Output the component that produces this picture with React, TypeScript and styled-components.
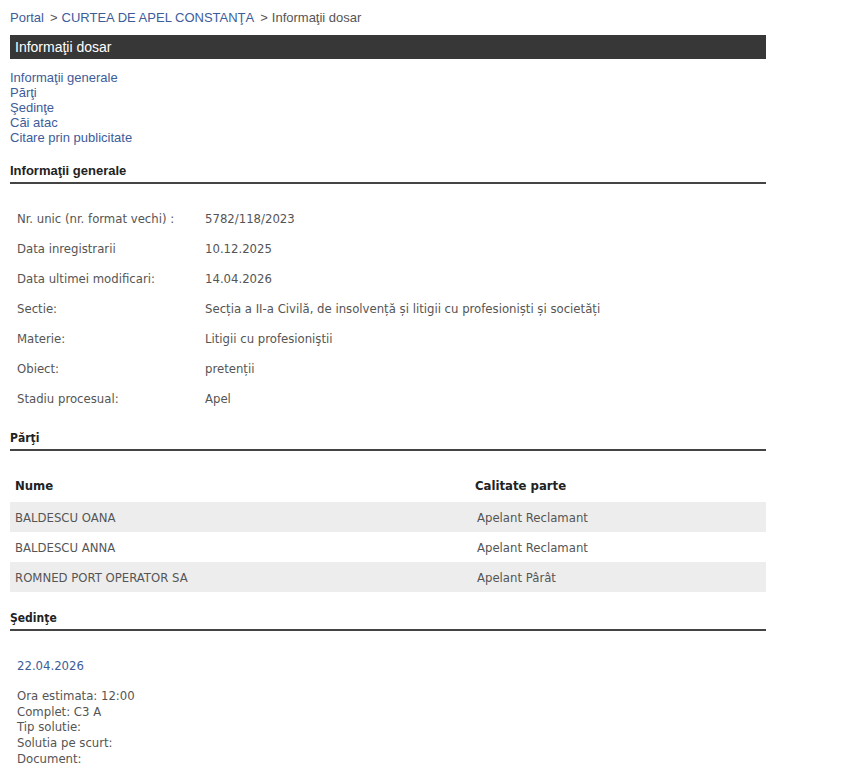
import React from 'react';
import styled, { createGlobalStyle } from 'styled-components';

const GlobalStyle = createGlobalStyle`
  body {
    margin: 0;
    background: #fff;
    font-family: "Liberation Sans", Arial, sans-serif;
  }
`;

const infoRows: [string, string][] = [
  ['Nr. unic (nr. format vechi) :', '5782/118/2023'],
  ['Data inregistrarii', '10.12.2025'],
  ['Data ultimei modificari:', '14.04.2026'],
  ['Sectie:', 'Secția a II-a Civilă, de insolvență și litigii cu profesioniști și societăți'],
  ['Materie:', 'Litigii cu profesioniştii'],
  ['Obiect:', 'pretenții'],
  ['Stadiu procesual:', 'Apel'],
];

const parti: [string, string][] = [
  ['BALDESCU OANA', 'Apelant Reclamant'],
  ['BALDESCU ANNA', 'Apelant Reclamant'],
  ['ROMNED PORT OPERATOR SA', 'Apelant Pârât'],
];

const sedintaLines = [
  'Ora estimata: 12:00',
  'Complet: C3 A',
  'Tip solutie:',
  'Solutia pe scurt:',
  'Document:',
];

export default function App() {
  return (
    <>
      <GlobalStyle />
      <Page>
        <Breadcrumb>
          <Crumb href="#">Portal</Crumb>
          <Sep>&gt;</Sep>
          <Crumb href="#">CURTEA DE APEL CONSTANŢA</Crumb>
          <Sep>&gt;</Sep>
          <Current>Informaţii dosar</Current>
        </Breadcrumb>

        <TitleBar>Informaţii dosar</TitleBar>

        <Nav>
          <NavLink href="#">Informaţii generale</NavLink>
          <NavLink href="#">Părţi</NavLink>
          <NavLink href="#">Şedinţe</NavLink>
          <NavLink href="#">Căi atac</NavLink>
          <NavLink href="#">Citare prin publicitate</NavLink>
        </Nav>

        <SectionTitle>Informaţii generale</SectionTitle>
        <InfoTable>
          <tbody>
            {infoRows.map(([label, value]) => (
              <InfoRow key={label}>
                <InfoLabel>{label}</InfoLabel>
                <InfoValue>{value}</InfoValue>
              </InfoRow>
            ))}
          </tbody>
        </InfoTable>

        <SectionTitle $condensed>Părţi</SectionTitle>
        <PartiTable>
          <thead>
            <tr>
              <HeadCell $first>Nume</HeadCell>
              <HeadCell>Calitate parte</HeadCell>
            </tr>
          </thead>
          <tbody>
            {parti.map(([name, role], i) => (
              <PartiRow key={name} $striped={i % 2 === 0}>
                <Cell $first>{name}</Cell>
                <Cell>{role}</Cell>
              </PartiRow>
            ))}
          </tbody>
        </PartiTable>

        <SectionTitle $condensed>Şedinţe</SectionTitle>
        <Sedinta>
          <SedintaDate>22.04.2026</SedintaDate>
          <SedintaDetails>
            {sedintaLines.map((l) => (
              <div key={l}>{l}</div>
            ))}
          </SedintaDetails>
        </Sedinta>
      </Page>
    </>
  );
}

const Page = styled.div`
  width: 756px;
  padding: 0 0 20px 10px;
`;

const Breadcrumb = styled.div`
  display: flex;
  align-items: center;
  height: 35px;
  font-size: 13px;
  color: #555;
`;

const Crumb = styled.a`
  color: #3d5c9a;
  text-decoration: none;
`;

const Sep = styled.span`
  margin: 0 4px 0 6px;
  color: #555;
`;

const Current = styled.span`
  color: #555;
`;

const TitleBar = styled.div`
  height: 24px;
  line-height: 24px;
  padding-left: 5px;
  background: #373737;
  color: #fff;
  font-size: 14px;
`;

const Nav = styled.nav`
  display: flex;
  flex-direction: column;
  padding-top: 11px;
  margin-bottom: 15px;
`;

const NavLink = styled.a`
  font-size: 13px;
  line-height: 15px;
  height: 15px;
  color: #3d5c9a;
  text-decoration: none;
`;

const SectionTitle = styled.h3<{ $condensed?: boolean }>`
  margin: 0;
  height: 24px;
  line-height: 22px;
  border-bottom: 2px solid #444;
  box-sizing: border-box;
  font-size: ${(p) => (p.$condensed ? '12px' : '13px')};
  font-family: ${(p) =>
    p.$condensed
      ? '"DejaVu Sans Condensed", "DejaVu Sans", sans-serif'
      : '"Liberation Sans", Arial, sans-serif'};
  font-weight: bold;
  color: #222;
`;

const InfoTable = styled.table`
  border-collapse: collapse;
  margin: 19px 0 14px;
  font-family: "DejaVu Sans Condensed", "DejaVu Sans", sans-serif;
  font-size: 13px;
  color: #555;
`;

const InfoRow = styled.tr`
  height: 30px;
`;

const InfoLabel = styled.td`
  width: 188px;
  padding: 0 0 0 7px;
`;

const InfoValue = styled.td`
  padding: 0;
`;

const PartiTable = styled.table`
  width: 756px;
  border-collapse: collapse;
  margin: 21px 0 15px;
  font-family: "DejaVu Sans Condensed", "DejaVu Sans", sans-serif;
  font-size: 13px;
`;

const HeadCell = styled.th<{ $first?: boolean }>`
  height: 27px;
  padding: 0 0 3px ${(p) => (p.$first ? '5px' : '2px')};
  text-align: left;
  font-weight: bold;
  color: #222;
  width: ${(p) => (p.$first ? '458px' : 'auto')};
`;

const PartiRow = styled.tr<{ $striped: boolean }>`
  height: 30px;
  background: ${(p) => (p.$striped ? '#ededed' : '#fff')};
`;

const Cell = styled.td<{ $first?: boolean }>`
  padding: 0 0 0 ${(p) => (p.$first ? '5px' : '4px')};
  color: #555;
`;

const Sedinta = styled.div`
  padding: 27px 0 0 7px;
  font-family: "DejaVu Sans Condensed", "DejaVu Sans", sans-serif;
  font-size: 13px;
`;

const SedintaDate = styled.div`
  color: #3d5c9a;
  line-height: 15px;
  margin-bottom: 15px;
`;

const SedintaDetails = styled.div`
  color: #555;
  line-height: 15.7px;
`;
